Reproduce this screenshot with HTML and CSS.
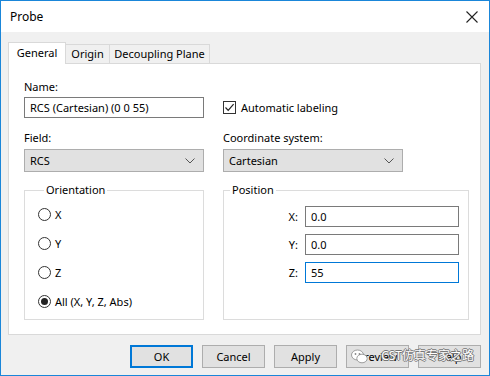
FILE: index.html
```html
<!DOCTYPE html>
<html lang="en">
<head>
    <meta charset="UTF-8">
    <title>Probe</title>
    <link rel="stylesheet" href="styles.css">
</head>
<body>

<div class="window">
    <div class="titlebar">
        <span class="title">Probe</span>
        <svg class="close" width="12" height="12" viewBox="0 0 12 12">
            <path d="M0.5 0.5 L11.5 11.5 M11.5 0.5 L0.5 11.5" stroke="#222" stroke-width="1.1" fill="none"/>
        </svg>
    </div>

    <div class="client">
        <div class="tabs">
            <div class="tab active">General</div>
            <div class="tab tab-origin">Origin</div>
            <div class="tab tab-decoupling">Decoupling Plane</div>
        </div>

        <div class="panel">
            <div class="form-grid">
                <div class="label">Name:</div>
                <div></div>

                <div class="textbox name-box">RCS (Cartesian) (0 0 55)</div>
                <div class="checkrow">
                    <span class="checkbox">
                        <svg width="11" height="11" viewBox="0 0 11 11">
                            <path d="M1.5 5.5 L4.2 8.3 L9.6 2.2" stroke="#222" stroke-width="1.2" fill="none"/>
                        </svg>
                    </span>
                    <span>Automatic labeling</span>
                </div>

                <div class="label row-field">Field:</div>
                <div class="label row-field">Coordinate system:</div>

                <div class="combo">
                    <span>RCS</span>
                    <svg width="10" height="6" viewBox="0 0 10 6"><path d="M0.5 0.5 L5 5 L9.5 0.5" stroke="#555" fill="none"/></svg>
                </div>
                <div class="combo">
                    <span>Cartesian</span>
                    <svg width="10" height="6" viewBox="0 0 10 6"><path d="M0.5 0.5 L5 5 L9.5 0.5" stroke="#555" fill="none"/></svg>
                </div>

                <fieldset class="group orientation">
                    <legend>Orientation</legend>
                    <div class="radio"><span class="dot"></span>X</div>
                    <div class="radio"><span class="dot"></span>Y</div>
                    <div class="radio"><span class="dot"></span>Z</div>
                    <div class="radio"><span class="dot checked"></span>All (X, Y, Z, Abs)</div>
                </fieldset>

                <fieldset class="group position">
                    <legend>Position</legend>
                    <div class="coord"><span>X:</span><div class="textbox">0.0</div></div>
                    <div class="coord"><span>Y:</span><div class="textbox">0.0</div></div>
                    <div class="coord"><span>Z:</span><div class="textbox focused">55</div></div>
                </fieldset>
            </div>
        </div>

        <div class="buttons">
            <div class="btn default">OK</div>
            <div class="btn">Cancel</div>
            <div class="btn">Apply</div>
            <div class="btn">Preview</div>
            <div class="btn">Help</div>
        </div>

        <div class="watermark">
            <svg width="17" height="15" viewBox="0 0 17 15">
                <ellipse cx="6.5" cy="6" rx="6" ry="5" fill="#fff" stroke="#888" stroke-width="0.8"/>
                <ellipse cx="11" cy="9.5" rx="5.2" ry="4.3" fill="#fff" stroke="#888" stroke-width="0.8"/>
                <circle cx="4.5" cy="5" r="0.9" fill="#888"/>
                <circle cx="8.5" cy="5" r="0.9" fill="#888"/>
            </svg>
            <span>CST仿真专家之路</span>
        </div>
    </div>
</div>

</body>
</html>
```

FILE: styles.css
```css
body {
    margin: 0;
    font-family: 'Noto Sans', 'Noto Sans CJK SC', sans-serif;
    font-size: 11px;
    color: #000;
}
.window {
    width: 490px;
    height: 376px;
    box-sizing: border-box;
    border: 1px solid #1a86d9;
    background-color: #f0f0f0;
    display: flex;
    flex-direction: column;
}
.titlebar {
    height: 31px;
    background-color: #fff;
    display: flex;
    align-items: center;
    justify-content: space-between;
    padding: 0 11px 0 9px;
}
.title {
    font-size: 12px;
    padding-bottom: 1px;
}
.client {
    position: relative;
    flex: 1;
    padding: 10px 8px 0 7px;
}
.tabs {
    display: flex;
    align-items: flex-end;
    height: 21px;
    position: relative;
    z-index: 1;
}
.tab {
    box-sizing: border-box;
    height: 19px;
    border: 1px solid #d9d9d9;
    border-bottom: none;
    background-color: #f0f0f0;
    text-align: center;
    line-height: 18px;
    margin-left: -1px;
}
.tab.active {
    height: 22px;
    margin-left: 0;
    margin-bottom: -1px;
    background-color: #fff;
    width: 58px;
    line-height: 20px;
    position: relative;
    z-index: 2;
}
.tab-origin {
    width: 45px;
}
.tab-decoupling {
    width: 101px;
}
.panel {
    box-sizing: border-box;
    height: 272px;
    background-color: #fff;
    border: 1px solid #d9d9d9;
    padding: 15px 0 0 15px;
}
.form-grid {
    display: grid;
    grid-template-columns: 180px 246px;
    column-gap: 19px;
    align-items: center;
}
.label {
    line-height: 16px;
}
.row-field {
    margin-top: 12px;
}
.textbox {
    box-sizing: border-box;
    height: 21px;
    border: 1px solid #7a7a7a;
    background-color: #fff;
    line-height: 19px;
    padding-left: 5px;
}
.textbox.focused {
    border-color: #0078d7;
}
.name-box {
    margin-top: 2px;
}
.checkrow {
    display: flex;
    align-items: center;
    margin-top: 2px;
}
.checkbox {
    box-sizing: border-box;
    width: 13px;
    height: 13px;
    border: 1px solid #333;
    margin-right: 5px;
    display: flex;
    align-items: center;
    justify-content: center;
}
.combo {
    box-sizing: border-box;
    width: 180px;
    height: 23px;
    margin-top: 3px;
    background-color: #e1e1e1;
    border: 1px solid #adadad;
    display: flex;
    align-items: center;
    justify-content: space-between;
    padding: 0 8px 0 5px;
}
.group {
    box-sizing: border-box;
    margin: 10px 0 0;
    height: 138px;
    border: 1px solid #dcdcdc;
    padding: 2px 0 0 13px;
    align-self: start;
}
.group legend {
    padding: 0 2px;
    margin-left: 6px;
    line-height: 16px;
}
.radio {
    height: 29px;
    display: flex;
    align-items: center;
}
.dot {
    box-sizing: border-box;
    width: 13px;
    height: 13px;
    border: 1px solid #333;
    border-radius: 50%;
    margin-right: 4px;
    display: flex;
    align-items: center;
    justify-content: center;
}
.dot.checked::after {
    content: '';
    width: 7px;
    height: 7px;
    border-radius: 50%;
    background-color: #222;
}
.position {
    padding: 8px 9px 0 0;
}
.coord {
    display: flex;
    justify-content: flex-end;
    align-items: center;
    margin-bottom: 7px;
}
.coord span {
    margin-right: 7px;
}
.coord .textbox {
    width: 154px;
}
.buttons {
    display: flex;
    justify-content: flex-end;
    gap: 9px;
    margin-top: 10px;
}
.btn {
    box-sizing: border-box;
    width: 63px;
    height: 23px;
    background-color: #e1e1e1;
    border: 1px solid #adadad;
    text-align: center;
    line-height: 21px;
}
.btn.default {
    border: 2px solid #0078d7;
    line-height: 19px;
}
.watermark {
    position: absolute;
    right: 15px;
    bottom: 11px;
    display: flex;
    align-items: center;
    gap: 13px;
    color: #fff;
    font-size: 12px;
    line-height: 16px;
    text-shadow: 1px 0 0 #777, -1px 0 0 #777, 0 1px 0 #777, 0 -1px 0 #777;
}
```
